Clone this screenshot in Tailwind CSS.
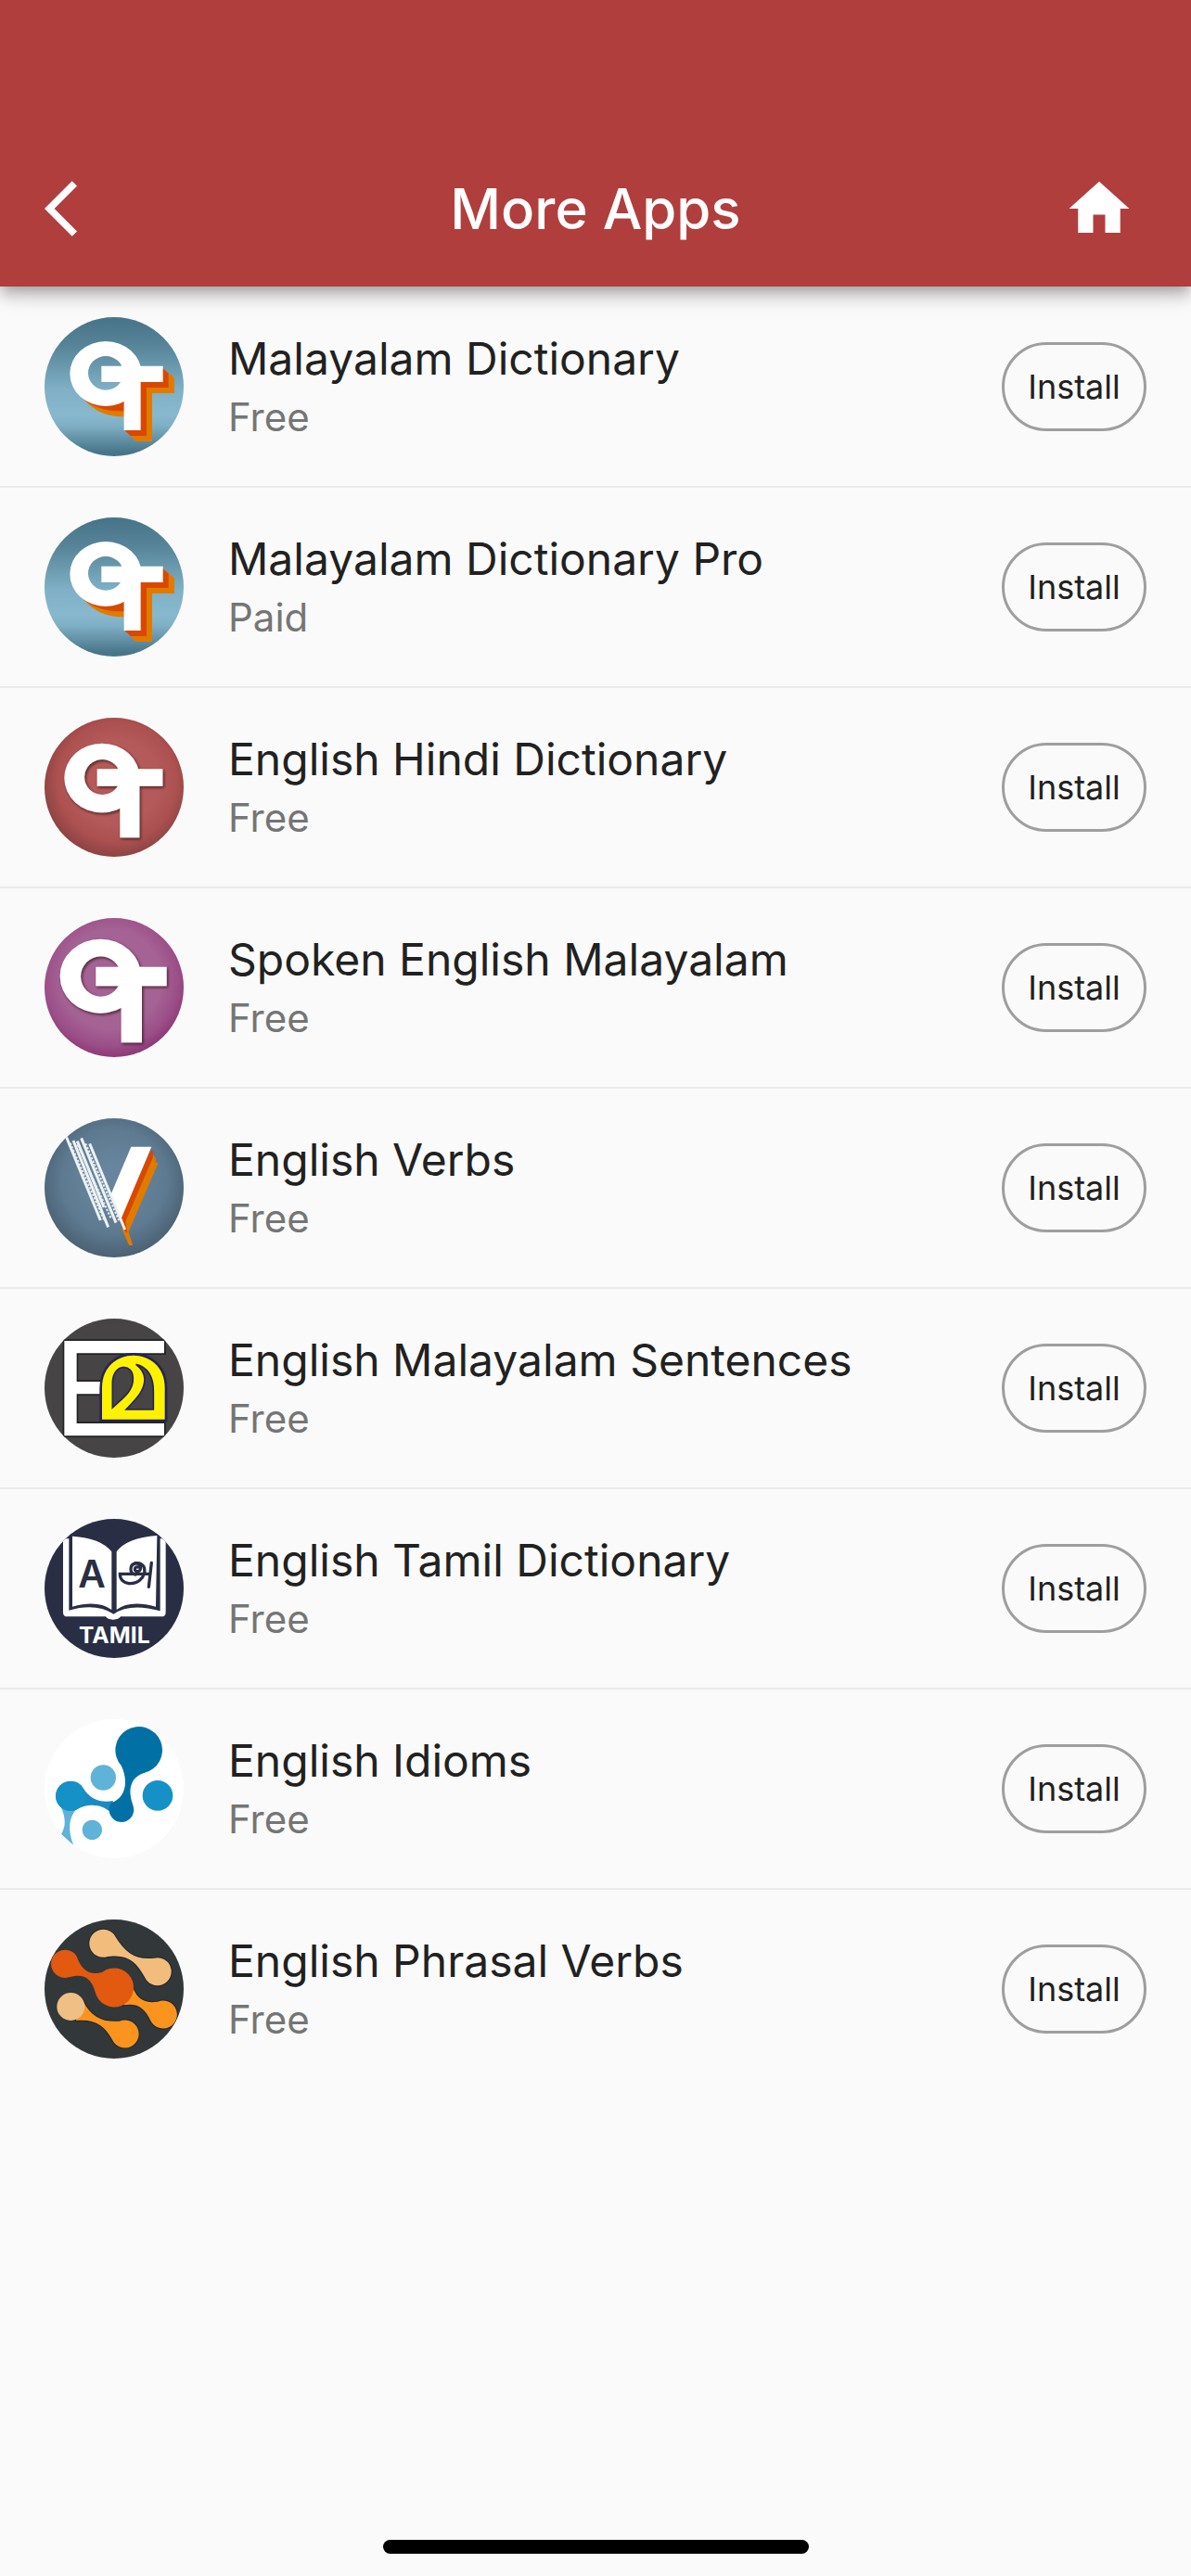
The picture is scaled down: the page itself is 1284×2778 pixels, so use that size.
<!DOCTYPE html>
<html lang="en">
<head>
    <meta charset="UTF-8">
    <meta name="viewport" content="width=device-width, initial-scale=1.0">
    <title>More Apps</title>
    <script src="https://cdn.jsdelivr.net/npm/@tailwindcss/browser@4"></script>
</head>
<body class="bg-[#fafafa] min-h-screen flex flex-col font-['Inter',sans-serif] text-[#212121]">
    <header class="relative bg-[#b03e3d] text-white pt-[141px] shadow-[0_6px_12px_-3px_rgba(0,0,0,0.2),0_12px_15px_0_rgba(0,0,0,0.14),0_3px_30px_0_rgba(0,0,0,0.12)]">
        <div class="h-[168px] px-12 grid grid-cols-[1fr_auto_1fr] items-center">
            <a href="#back" aria-label="Back">
                <svg class="size-[72px]" viewBox="0 0 24 24" fill="currentColor"><path d="M11.67 3.87 9.9 2.1 0 12l9.9 9.9 1.77-1.77L3.54 12z"/></svg>
            </a>
            <h1 class="text-[60px] leading-[72px] font-medium">More Apps</h1>
            <a href="#home" aria-label="Home" class="justify-self-end px-3">
                <svg class="size-[78px]" viewBox="0 0 24 24" fill="currentColor"><path d="M10 20v-6h4v6h5v-8h3L12 3 2 12h3v8z"/></svg>
            </a>
        </div>
    </header>

    <main>
        <ul id="app-list" class="pt-px"></ul>
    </main>

    <footer class="mt-auto pb-6 flex justify-center">
        <div class="w-[459px] h-[15px] rounded-full bg-black"></div>
    </footer>

    <svg class="absolute size-0" aria-hidden="true">
        <defs>
            <linearGradient id="blue-bg" x1="0" y1="0" x2="0" y2="1">
                <stop offset="0.02" stop-color="#487589"/>
                <stop offset="0.2" stop-color="#568397"/>
                <stop offset="0.52" stop-color="#7fb0c5"/>
                <stop offset="0.7" stop-color="#88b8cd"/>
                <stop offset="0.78" stop-color="#7fafc4"/>
                <stop offset="0.97" stop-color="#487589"/>
            </linearGradient>
            <radialGradient id="red-bg" cx="0.52" cy="0.46" r="0.6">
                <stop offset="0.5" stop-color="#b45a5a"/>
                <stop offset="0.72" stop-color="#ac5050"/>
                <stop offset="1" stop-color="#7c3c3c"/>
            </radialGradient>
            <radialGradient id="purple-bg" cx="0.48" cy="0.44" r="0.6">
                <stop offset="0.6" stop-color="#a56294"/>
                <stop offset="0.8" stop-color="#9b4f88"/>
                <stop offset="1" stop-color="#86306f"/>
            </radialGradient>
            <radialGradient id="slate-bg" cx="0.5" cy="0.45" r="0.58">
                <stop offset="0.2" stop-color="#67859d"/>
                <stop offset="0.65" stop-color="#5d7a90"/>
                <stop offset="1" stop-color="#495c6e"/>
            </radialGradient>
            <filter id="soft-shadow" x="-20%" y="-20%" width="140%" height="140%">
                <feDropShadow dx="4" dy="5" stdDeviation="4" flood-color="#2a1018" flood-opacity="0.75"/>
            </filter>
        </defs>
    </svg>

    <script>
        const icons = {
            blue: `
                <svg class="size-full" viewBox="54 66 450 450">
                    <path fill="url(#blue-bg)" d="M54 66h450v450H54z"/>
                    <path fill="#e07b00" d="M185 335Q230 388 311 388V340zM437 232L474 262V312H402V468H350L315 434L365 270z"/>
                    <path fill="#d84800" d="M180 332Q232 372 311 370V338zM437 232L455 248V294H384V450H333L315 434L365 270z"/>
                    <path fill="#fff" fill-rule="evenodd" d="M136 249a116 105 0 1 0 232 0a116 105 0 1 0-232 0zM195 247a57 55 0 1 0 114 0a57 55 0 1 0-114 0z"/>
                    <path fill="#fff" d="M238 224H437V276H365V432H311V276H238z"/>
                    <path fill="#fff" d="M303 200h30v110h-30z"/>
                </svg>`,
            red: `
                <svg class="size-full" viewBox="54 72 450 450">
                    <path fill="url(#red-bg)" d="M54 72h450v450H54z"/>
                    <g fill="#fff" filter="url(#soft-shadow)">
                        <path fill-rule="evenodd" d="M118 267a122 112 0 1 0 244 0a122 112 0 1 0-244 0zM183 264a58 57 0 1 0 116 0a58 57 0 1 0-116 0z"/>
                        <path d="M224 238H436V293H361V460H298V293H224z"/>
                    </g>
                </svg>`,
            purple: `
                <svg class="size-full" viewBox="54 60 450 450">
                    <path fill="url(#purple-bg)" d="M54 60h450v450H54z"/>
                    <g fill="#fff" filter="url(#soft-shadow)">
                        <path fill-rule="evenodd" d="M104 248a131 120 0 1 0 262 0a131 120 0 1 0-262 0zM171 249a65 65 0 1 0 130 0a65 65 0 1 0-130 0z"/>
                        <path d="M220 218H449V280H369V463H302V280H220z"/>
                    </g>
                </svg>`,
            verbs: `
                <svg class="size-full" viewBox="54 78 450 450">
                    <path fill="url(#slate-bg)" d="M54 78h450v450H54z"/>
                    <path fill="#e07b00" d="M400 190L414 208L412 220L422 222L326 445L339 488L328 490L306 440L300 400z"/>
                    <path fill="#d84800" d="M398 180L406 186L404 206L316 412L322 450L304 432L298 400z"/>
                    <path fill="#fff" d="M334 170H400L298 412L268 326z"/>
                    <g stroke="#eef1f4" stroke-width="9" fill="none">
                        <path d="M122 132L235 408M147 150L260 430M173 142L285 416M200 160L314 438M160 152L246 366"/>
                    </g>
                    <path stroke="#e8edf1" stroke-width="6" stroke-dasharray="7 5" fill="none" d="M137 158L246 406M161 164L270 404M187 160L296 412"/>
                </svg>`,
            sentences: `
                <svg class="size-full" viewBox="54 66 450 450">
                    <path fill="#464444" d="M54 66h450v450H54z"/>
                    <path fill="#fff" stroke="#222" stroke-width="10" paint-order="stroke" d="M118 138H441V178H158V270H235V310H158V405H441V445H118z"/>
                    <path fill="#fff200" stroke="#23235a" stroke-width="16" paint-order="stroke" d="M240 392V290C240 150 443 150 443 290V392z"/>
                    <g fill="#464444" stroke="#23235a" stroke-width="5">
                        <path d="M274 354V275C274 210 342 208 340 262C340 300 310 320 274 354z"/>
                        <path d="M350 214C396 226 406 262 406 300V360H318C350 326 378 300 378 262Q378 236 350 214z"/>
                    </g>
                </svg>`,
            tamil: `
                <svg class="size-full" viewBox="54 84 450 450">
                    <path fill="#292e44" d="M54 84h450v450H54z"/>
                    <path fill="#fff" d="M126 148h306q14 0 14 14V386q0 14-14 14H300q-6 10-24 10t-24-10H128q-14 0-14-14V150z"/>
                    <path fill="#292e44" d="M133 130H428V382Q330 355 278 392Q220 355 133 380z"/>
                    <path fill="#fff" d="M144 140Q235 145 271 190V378Q225 345 144 368zM418 138Q320 145 287 190V378Q330 345 414 368z"/>
                    <path fill="none" stroke="#292e44" stroke-width="4" d="M424 146V376M138 146V376"/>
                    <text x="207" y="307" text-anchor="middle" font-family="Inter" font-weight="600" font-size="122" fill="#292e44">A</text>
                    <g fill="none" stroke="#292e44" stroke-width="10" stroke-linecap="round">
                        <path d="M356 240C344 236 342 256 356 254C372 250 364 226 348 228C328 232 328 262 348 264"/>
                        <path d="M390 262H298C298 300 350 302 370 274C388 244 372 224 348 227"/>
                        <path d="M400 226L391 304"/>
                    </g>
                    <text x="280" y="486" text-anchor="middle" font-family="Inter" font-weight="700" font-size="74" fill="#fff">TAMIL</text>
                </svg>`,
            idioms: `
                <svg class="size-full" viewBox="54 72 450 450">
                    <path fill="#fff" d="M54 72h450v450H54z"/>
                    <path fill="#5fb2d8" d="M108 358C122 390 124 420 108 444L148 480C128 430 132 390 158 362z"/>
                    <path fill="#1a8bc2" d="M264 370C240 350 200 340 158 364A48 48 0 1 1 180 296C200 330 236 344 276 336z"/>
                    <circle cx="138" cy="321" r="48" fill="#1691c7"/>
                    <path fill="#0171a5" d="M302 222A76 76 0 1 1 376 246C336 258 320 296 340 350A40 40 0 1 1 270 342C314 328 328 276 302 222z"/>
                    <circle cx="244" cy="261" r="41" fill="#5fb2d8"/>
                    <circle cx="208" cy="430" r="32" fill="#5fb2d8"/>
                    <circle cx="420" cy="319" r="49" fill="#1691c7"/>
                </svg>`,
            phrasal: `
                <svg class="size-full" viewBox="54 75 450 450">
                    <path fill="#323739" d="M54 75h450v450H54z"/>
                    <g stroke="#1f262b" stroke-width="6" paint-order="stroke">
                        <path fill="#f2bc7c" d="M284 132A45 45 0 1 0 250 197C320 184 350 210 378 262A45 45 0 1 0 408 200C350 206 318 186 284 132z"/>
                        <path fill="#fb931f" d="M334 280C350 330 372 348 420 341A45 45 0 1 1 398 404C378 360 354 344 310 352z"/>
                        <path fill="#fb931f" d="M178 338C206 390 240 408 296 404A45 45 0 1 1 274 466C250 420 220 396 156 402z"/>
                    </g>
                    <path fill="#e25910" d="M158 194A45 45 0 1 0 132 262C180 248 206 264 218 310A63 63 0 1 0 240 246C200 256 174 240 158 194z"/>
                    <circle cx="139" cy="357" r="45" fill="#f0bf85"/>
                </svg>`
        };

        const apps = [
            { name: 'Malayalam Dictionary', price: 'Free', icon: 'blue' },
            { name: 'Malayalam Dictionary Pro', price: 'Paid', icon: 'blue' },
            { name: 'English Hindi Dictionary', price: 'Free', icon: 'red' },
            { name: 'Spoken English Malayalam', price: 'Free', icon: 'purple' },
            { name: 'English Verbs', price: 'Free', icon: 'verbs' },
            { name: 'English Malayalam Sentences', price: 'Free', icon: 'sentences' },
            { name: 'English Tamil Dictionary', price: 'Free', icon: 'tamil' },
            { name: 'English Idioms', price: 'Free', icon: 'idioms' },
            { name: 'English Phrasal Verbs', price: 'Free', icon: 'phrasal' }
        ];

        function createAppRow(app) {
            return `
                <li class="h-[216px] px-12 flex items-center border-b-2 border-[#ebebeb] last:border-transparent">
                    <div class="size-[150px] shrink-0 rounded-full overflow-hidden" aria-hidden="true">${icons[app.icon]}</div>
                    <div class="ml-12 flex-1 min-w-0">
                        <h2 class="text-[48px] leading-[66px]">${app.name}</h2>
                        <p class="text-[42px] leading-[60px] text-[#757575]">${app.price}</p>
                    </div>
                    <button type="button" aria-label="Install ${app.name}" class="w-[156px] h-24 shrink-0 rounded-full border-3 border-[#9e9e9e] text-[36px]">Install</button>
                </li>
            `;
        }

        document.getElementById('app-list').innerHTML = apps.map(createAppRow).join('');
    </script>
</body>
</html>
